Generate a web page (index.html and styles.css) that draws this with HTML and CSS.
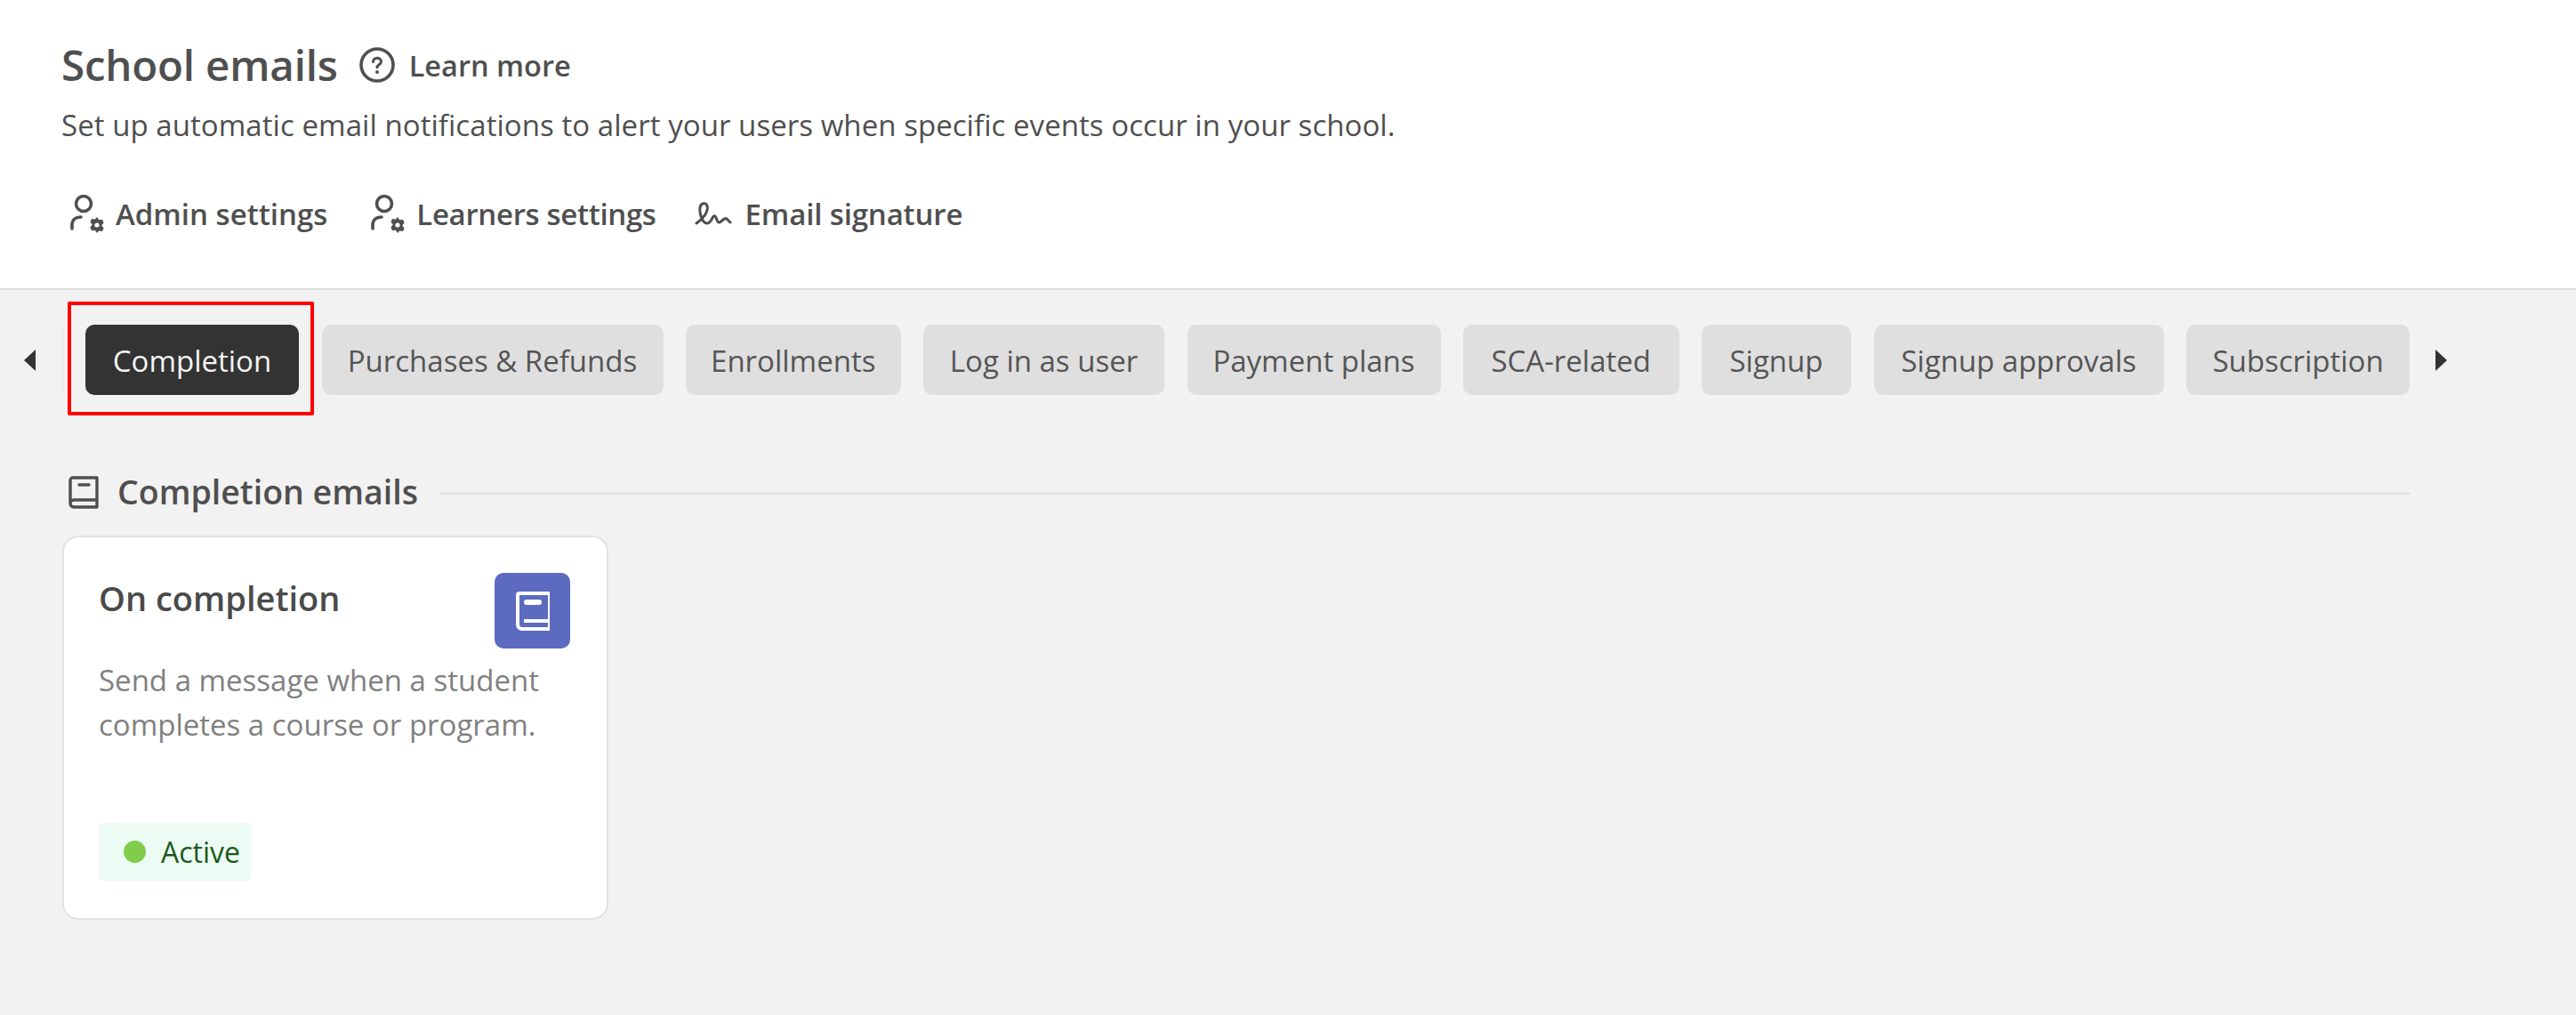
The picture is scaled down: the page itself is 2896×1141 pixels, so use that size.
FILE: index.html
```html
<!DOCTYPE html>
<html lang="en">
<head>
<meta charset="utf-8">
<title>School emails</title>
<link rel="stylesheet" href="styles.css">
</head>
<body>
<header class="top">
  <div class="title-row">
    <h1 class="title">School emails</h1>
    <a class="learn">
      <svg class="help-icon" viewBox="0 0 40 40"><circle cx="20" cy="20" r="18" fill="none" stroke="#4f4f4f" stroke-width="3.6"/><path d="M15.5 16.5c0-2.6 2-4.2 4.5-4.2s4.5 1.6 4.5 4c0 3.5-4.5 3.4-4.500 6.400" fill="none" stroke="#4f4f4f" stroke-width="3" stroke-linecap="round"/><circle cx="20" cy="28" r="2" fill="#4f4f4f"/></svg>
      <span>Learn more</span>
    </a>
  </div>
  <p class="subtitle">Set up automatic email notifications to alert your users when specific events occur in your school.</p>
  <nav class="settings">
    <a class="setting setting-admin">
      <svg class="person-icon" viewBox="0 0 44 44"><circle cx="17" cy="11" r="8.5" fill="none" stroke="#4f4f4f" stroke-width="3.6"/><path d="M4 39v-4c0-6 4-9 10-9" fill="none" stroke="#4f4f4f" stroke-width="3.6" stroke-linecap="round"/><path d="M32 26l2.2 3.2 3.8-.4 1.6 3.6-2.4 3 2.4 3-1.6 3.6-3.8-.4L32 44l-2.200-3.200-3.800.4-1.600-3.600 2.400-3-2.400-3 1.600-3.600 3.800.4z" fill="#4f4f4f"/><circle cx="32" cy="35" r="2.6" fill="#fff"/></svg>
      <span>Admin settings</span>
    </a>
    <a class="setting setting-learners">
      <svg class="person-icon" viewBox="0 0 44 44"><circle cx="17" cy="11" r="8.5" fill="none" stroke="#4f4f4f" stroke-width="3.6"/><path d="M4 39v-4c0-6 4-9 10-9" fill="none" stroke="#4f4f4f" stroke-width="3.6" stroke-linecap="round"/><path d="M32 26l2.2 3.2 3.8-.4 1.6 3.6-2.4 3 2.4 3-1.6 3.6-3.8-.4L32 44l-2.200-3.200-3.800.4-1.600-3.600 2.400-3-2.400-3 1.600-3.600 3.800.4z" fill="#4f4f4f"/><circle cx="32" cy="35" r="2.6" fill="#fff"/></svg>
      <span>Learners settings</span>
    </a>
    <a class="setting setting-signature">
      <svg class="sign-icon" viewBox="0 0 42 28"><path d="M2 25C9 20 16 12 14 5.500 13 1.500 7 1.500 6 7.500 5 15 9 25 14 25 19 25 20 15 23 17 25 19 25 25 28 24 31 23 33 18 36 20L40 24" fill="none" stroke="#4f4f4f" stroke-width="3" stroke-linecap="round" stroke-linejoin="round"/></svg>
      <span>Email signature</span>
    </a>
  </nav>
</header>
<main class="content">
  <div class="tabs-row">
    <button class="arrow"><span class="tri tri-left"></span></button>
    <div class="tabs">
      <span class="tab tab-active">Completion<span class="highlight"></span></span>
      <span class="tab">Purchases &amp; Refunds</span>
      <span class="tab">Enrollments</span>
      <span class="tab">Log in as user</span>
      <span class="tab">Payment plans</span>
      <span class="tab">SCA-related</span>
      <span class="tab">Signup</span>
      <span class="tab">Signup approvals</span>
      <span class="tab">Subscription</span>
    </div>
    <button class="arrow arrow-right"><span class="tri tri-right"></span></button>
  </div>
  <section class="section">
    <div class="section-head">
      <svg class="book-icon" viewBox="0 0 34 37"><path d="M2 31V5a3 3 0 0 1 3-3h27v33H6a4 4 0 0 1-4-4zM2 31a4 4 0 0 1 4-4h26" fill="none" stroke="#4f4f4f" stroke-width="3.4" stroke-linejoin="round"/><path d="M12 10h11" stroke="#4f4f4f" stroke-width="3.4" stroke-linecap="round"/></svg>
      <h2 class="section-title">Completion emails</h2>
      <span class="section-line"></span>
    </div>
    <article class="card">
      <div class="card-top">
        <h3 class="card-title">On completion</h3>
        <span class="card-icon">
          <svg class="card-book" viewBox="0 0 38 44"><path d="M2 37V4a2 2 0 0 1 2-2h34v40H7a5 5 0 0 1-5-5z" fill="none" stroke="#fff" stroke-width="4"/><path d="M9 33h27" stroke="#fff" stroke-width="4"/><path d="M12 12h14" stroke="#fff" stroke-width="6" stroke-linecap="round"/></svg>
        </span>
      </div>
      <p class="card-desc">Send a message when a student completes a course or program.</p>
      <span class="status"><span class="dot"></span>Active</span>
    </article>
  </section>
</main>
</body>
</html>
```
FILE: styles.css
```css
* { box-sizing: border-box; }
html, body { margin: 0; padding: 0; }
body {
  background: #f2f2f2;
  color: #4f4f4f;
  font-family: "Open Sans", "Noto Sans", sans-serif;
  height: 1141px;
  overflow: hidden;
}
h1, h2, h3, p { margin: 0; }

.top {
  background: #fff;
  height: 326px;
  border-bottom: 2px solid #dcdcdc;
  padding: 46px 0 0 69px;
}
.title-row { display: flex; align-items: center; height: 54px; }
.title { font-size: 47.5px; font-weight: 600; line-height: 54px; letter-spacing: -0.2px; }
.learn { display: flex; align-items: center; margin-left: 24px; gap: 16px; font-size: 32.5px; font-weight: 600; }
.help-icon { width: 40px; height: 40px; }
.subtitle { font-size: 33px; line-height: 44px; margin-top: 19px; letter-spacing: 0.055px; }

.settings { display: flex; margin-top: 51px; height: 52px; align-items: center; }
.setting { display: flex; align-items: center; font-size: 33px; font-weight: 600; }
.setting-admin { margin-left: 8px; }
.setting-learners { margin-left: 47px; letter-spacing: -0.33px; }
.setting-signature { margin-left: 43px; letter-spacing: -0.15px; }
.person-icon { width: 44px; height: 44px; margin-right: 9px; }
.sign-icon { width: 42px; height: 28px; margin-right: 15px; }

.tabs-row {
  display: grid;
  grid-template-columns: 70px 2639px 40px;
  padding-top: 39px;
  height: 118px;
}
.arrow {
  background: none;
  border: 0;
  padding: 0;
  display: flex;
  align-items: center;
}
.tri { display: block; width: 0; height: 0; border-top: 12.500px solid transparent; border-bottom: 12.500px solid transparent; }
.tri-left { border-right: 13px solid #333; margin-left: 27px; }
.tri-right { border-left: 13px solid #333; margin-left: 29px; }

.tabs {
  display: grid;
  grid-template-columns: 240px 384px 241.5px 271px 285px 242.5px 168px 326px 251px;
  column-gap: 25.5px;
  padding-left: 25px;
  border-left: 1px solid #e6e6e6;
}
.tab {
  position: relative;
  height: 79px;
  background: #dfdfdf;
  border-radius: 10px;
  color: #555;
  font-size: 33px;
  line-height: 81px;
  text-align: center;
  white-space: nowrap;
}
.tab-active { background: #333; color: #f4f4f4; }
.highlight {
  position: absolute;
  top: -26px;
  left: -20px;
  right: -17px;
  bottom: -23px;
  border: 4px solid #f00;
  border-radius: 2px;
}

.section { padding: 0 0 0 70px; }
.section-head { display: flex; align-items: center; height: 40px; margin-top: 89px; width: 2639px; }
.book-icon { width: 34px; height: 37px; margin-left: 7px; }
.section-title { font-size: 37.5px; font-weight: 600; line-height: 40px; margin-left: 21px; white-space: nowrap; }
.section-line { flex: 1; height: 2px; background: #dfdfdf; margin: 4px 0 0 25px; }

.card {
  display: flex;
  flex-direction: column;
  width: 614px;
  height: 432px;
  margin-top: 29px;
  padding: 40px 41px 42px 39px;
  background: #fff;
  border: 2px solid #e3e3e3;
  border-radius: 18px;
}
.card-top { display: flex; justify-content: space-between; align-items: flex-start; }
.card-title { font-size: 38px; font-weight: 600; line-height: 50px; margin-top: 3px; color: #4a4a4a; }
.card-icon {
  display: flex;
  align-items: center;
  justify-content: center;
  width: 85px;
  height: 85px;
  background: #5c6bc0;
  border-radius: 10px;
}
.card-book { width: 38px; height: 44px; }
.card-desc { font-size: 33px; line-height: 50px; color: #808080; margin-top: 11px; }
.status {
  display: flex;
  align-items: center;
  width: 172px;
  height: 65px;
  margin-top: auto;
  padding-left: 28px;
  background: #ecfbf3;
  border-radius: 6px;
  font-size: 32px;
  color: #1c5a1a;
}
.dot { width: 25px; height: 25px; border-radius: 50%; background: #82cc4c; margin-right: 17px; }
```
